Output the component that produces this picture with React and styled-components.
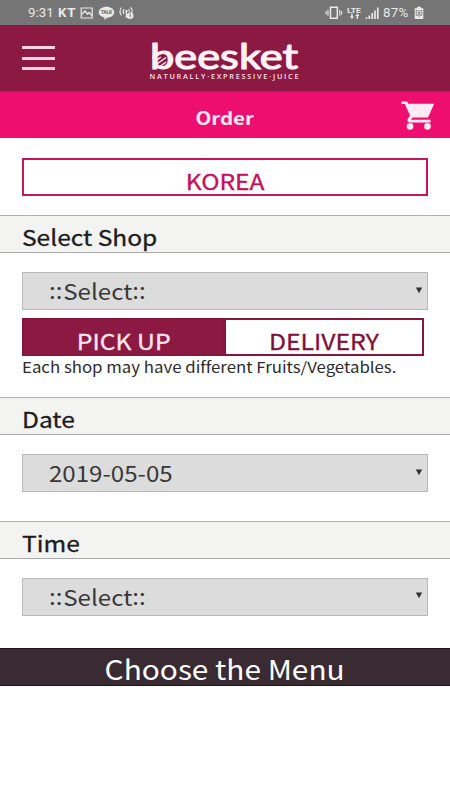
import React from "react";
import styled, { createGlobalStyle } from "styled-components";

const GlobalStyle = createGlobalStyle`
  * { box-sizing: border-box; }
  html, body { margin: 0; padding: 0; background: #fff; }
  body { font-family: "Noto Sans CJK KR", "Noto Sans", sans-serif; }
`;

const Screen = styled.div`
  width: 450px;
  height: 800px;
  overflow: hidden;
  background: #fff;
  color: #1c1c1c;
`;

const StatusBar = styled.div`
  height: 25px;
  padding: 1px 26px 0 28px;
  display: flex;
  align-items: center;
  justify-content: space-between;
  background: #757575;
  color: #e9e9e9;
  font: 400 13.3px/24px Roboto, sans-serif;
`;

const StatusGroup = styled.div`
  display: flex;
  align-items: center;
  height: 24px;
  svg { display: block; flex: none; }
`;

const Clock = styled.span`
  width: 30px;
  white-space: nowrap;
`;

const Carrier = styled.span`
  width: 22px;
  font-weight: 700;
  letter-spacing: 0.8px;
`;

const Percent = styled.span`
  width: 31px;
  letter-spacing: 0.3px;
`;

const Header = styled.header`
  height: 66px;
  padding: 0 22px;
  display: grid;
  grid-template-columns: 33px 1fr 33px;
  align-items: center;
  justify-items: center;
  background: #8c1941;
`;

const MenuButton = styled.button`
  width: 33px;
  height: 24px;
  padding: 0;
  border: 0;
  background: transparent;
  display: flex;
  flex-direction: column;
  justify-content: space-between;
  align-items: stretch;
`;

const MenuLine = styled.span`
  display: block;
  height: 3px;
  background: #ffd2e4;
`;

const TitleBar = styled.div`
  height: 47px;
  padding: 0 15px 0 48px;
  display: grid;
  grid-template-columns: 1fr 34px;
  align-items: center;
  background: #ee0e6f;
  border-top: 1px solid #d20f61;
  color: #ffeaf4;
  svg { display: block; }
`;

const Label = styled.span`
  display: inline-block;
  font-size: ${(p) => p.$size}px;
  font-weight: ${(p) => p.$weight || 400};
  font-variant-ligatures: none;
  -webkit-text-stroke: ${(p) => p.$stroke || 0}px currentColor;
  line-height: 36px;
  white-space: nowrap;
  transform: scaleX(${(p) => p.$stretch || 1.095});
  transform-origin: ${(p) => p.$origin || "left"} center;
`;

const CenteredTitle = styled.h1`
  margin: -2px 0 0;
  padding-left: 1px;
  text-align: center;
  font-weight: 700;
  line-height: 36px;
`;

const Country = styled.div`
  height: 38px;
  margin: 20px 22px 19px;
  padding-top: 2px;
  border: 2px solid #c6155f;
  color: #c5105c;
  text-align: center;
`;

const SectionHeading = styled.h2`
  height: 38px;
  margin: 0;
  padding: 2px 22px 0;
  background: #f3f3f2;
  border-top: 1px solid #b0b0b0;
  border-bottom: 1px solid #a9a9a9;
  font-weight: 500;
  line-height: 36px;
`;

const SelectBox = styled.div`
  height: 38px;
  margin: 19px 22px 0;
  padding: 0 4px 2px 26px;
  display: flex;
  align-items: center;
  justify-content: space-between;
  background: #dcdcdc;
  border: 1px solid #b9b9b9;
  color: #383838;
`;

const Colons = styled.span`
  display: inline-block;
  width: 13px;
  line-height: 30px;
  transform: translateY(-1px);
`;

const Tabs = styled.div`
  width: 402px;
  height: 38px;
  margin: 8px 22px 0;
  display: grid;
  grid-template-columns: 203px 199px;
`;

const Tab = styled.div`
  height: 38px;
  padding-top: 2px;
  border: 2px solid #85173f;
  border-left-width: ${(p) => (p.$active ? 2 : 1)}px;
  background: ${(p) => (p.$active ? "#8c1941" : "#fff")};
  color: ${(p) => (p.$active ? "#ffe6f0" : "#7f1139")};
  text-align: center;
`;

const Note = styled.p`
  height: 41px;
  margin: 0 22px;
  color: #2c2c2c;
  line-height: 21px;
  span { line-height: 21px; }
`;

const Gap = styled.div`
  height: ${(p) => p.$h}px;
`;

const MenuAction = styled.button`
  display: block;
  width: 100%;
  height: 38px;
  padding: 2px 0 0;
  border: 0;
  border-top: 1px solid #240f19;
  border-bottom: 1px solid #240f19;
  background: #3a2a31;
  color: #fff;
  font-family: inherit;
  text-align: center;
`;

const LogoArt = styled.svg`
  display: block;
  overflow: visible;
`;

function Logo() {
  return (
    <LogoArt width="152" height="42" viewBox="0 0 152 42" aria-label="beesket">
      <text x="1" y="32.3" textLength="148" lengthAdjust="spacingAndGlyphs" fill="#fff0f6" stroke="#fff0f6" strokeWidth="1.2" strokeLinejoin="round" fontFamily="Lato" fontWeight="400" fontSize="35.5">beesket</text>
      <path d="M3 20.5h5M5 25l7-5M5 29l12-8.5M9 31l8-6" stroke="#fff0f6" strokeWidth="1.5" />
      <text x="0.5" y="41.5" textLength="149" lengthAdjust="spacing" fill="#ffe0ec" fontFamily="Open Sans" fontWeight="600" fontSize="7.3">NATURALLY·EXPRESSIVE·JUICE</text>
    </LogoArt>
  );
}

function Cart() {
  return (
    <svg width="34" height="29" viewBox="0 0 34 29" fill="#ffeaf4">
      <path d="M0.5 0.5h5.5l1.4 2.3H33.2L27 16.5H11.5l-1.6 2.3H29.5V21.5H8.5q-3.2-.8-1.6-3.7L9 14.5 3.8 3H0.5z" />
      <circle cx="9" cy="25.4" r="3.3" />
      <circle cx="26.5" cy="25.4" r="3.3" />
    </svg>
  );
}

function LeftIcons() {
  return (
    <svg width="56" height="14" viewBox="0 0 56 14" fill="none" stroke="#e9e9e9">
      <path d="M1.2 2h11v10h-11z" strokeWidth="1.2" />
      <path d="M2 8l3-3 2.5 3 1.7-1.5 2.8 3" strokeWidth="1.3" />
      <path d="M26.5 0.8c4.2 0 7.7 2.3 7.7 5.5s-3.2 5.3-7 5.4L24 14l.6-2.5c-3.4-.6-5.8-2.6-5.8-5.2 0-3.2 3.4-5.5 7.7-5.5z" fill="#e9e9e9" stroke="none" />
      <text x="20.7" y="8.3" textLength="11.5" fill="#757575" stroke="none" fontFamily="Roboto" fontWeight="900" fontSize="5">TALK</text>
      <path d="M41.5 1.5q-3 4 0 8M44 3q-1.8 2.5 0 5M50.5 1.5q2.7 2.8 1 6M48.5 3q1.2 1.3.8 3" strokeWidth="1.1" />
      <circle cx="46.4" cy="5" r="1.2" fill="#e9e9e9" stroke="none" />
      <path d="M46.4 5v7" strokeWidth="1.2" />
      <circle cx="50.2" cy="9.7" r="3.3" fill="#e9e9e9" stroke="none" />
      <path d="M49.4 8.7l1-.8v3.6" stroke="#757575" strokeWidth=".8" />
    </svg>
  );
}

function RightIcons() {
  return (
    <svg width="58" height="14" viewBox="0 0 58 14" fill="none" stroke="#e9e9e9">
      <path d="M5.5 1.2h6.8v11H5.5z" strokeWidth="1.5" />
      <path d="M3 3.7v6M1.1 5v3.5M14.8 3.7v6M16.6 5v3.5" strokeWidth="1.1" />
      <text x="22" y="6.7" textLength="14" lengthAdjust="spacingAndGlyphs" fill="#e9e9e9" stroke="none" fontFamily="Roboto" fontWeight="700" fontSize="8">LTE</text>
      <path d="M26.2 7.5h1.4v3H29l-2.1 2.6-2.1-2.6h1.4zM31.7 13h1.4v-3h1.4l-2.1-2.6L30.3 10h1.4z" fill="#e9e9e9" stroke="none" />
      <path d="M41.5 13v-1.7M44.3 13v-3.5M47.2 13V7M50 13V4.5M52.8 13V1.5" strokeWidth="1.7" />
    </svg>
  );
}

function Battery() {
  return (
    <svg width="10" height="14" viewBox="0 0 10 14">
      <path d="M3 .8h4v1.4h2.3V13H.7V2.2H3z" fill="#e9e9e9" />
      <path d="M3.8 4.5H2.2v5h1.6M6.2 4.5h1.6v5H6.2M5 4v7M3.5 6l3 3M6.5 6l-3 3" stroke="#757575" strokeWidth=".8" fill="none" />
    </svg>
  );
}

function Arrow() {
  return (
    <svg width="8" height="7" viewBox="0 0 8 7">
      <path d="M.8.5h6.4L4 6.3z" fill="#333" />
    </svg>
  );
}

function Dropdown({ value, placeholder }) {
  return (
    <SelectBox>
      <Label $size={22}>
        {placeholder ? (
          <>
            <Colons>::</Colons>Select<Colons>::</Colons>
          </>
        ) : (
          value
        )}
      </Label>
      <Arrow />
    </SelectBox>
  );
}

export default function App() {
  return (
    <Screen>
      <GlobalStyle />
      <StatusBar>
        <StatusGroup>
          <Clock>9:31</Clock>
          <Carrier>KT</Carrier>
          <LeftIcons />
        </StatusGroup>
        <StatusGroup>
          <RightIcons />
          <Percent>87%</Percent>
          <Battery />
        </StatusGroup>
      </StatusBar>
      <Header>
        <MenuButton aria-label="Menu">
          <MenuLine />
          <MenuLine />
          <MenuLine />
        </MenuButton>
        <Logo />
      </Header>
      <TitleBar>
        <CenteredTitle>
          <Label $size={18} $weight={700} $stretch={1.14} $origin="center">Order</Label>
        </CenteredTitle>
        <Cart />
      </TitleBar>
      <Country>
        <Label $size={22} $stroke={0.3} $stretch={1.12} $origin="center">KOREA</Label>
      </Country>
      <SectionHeading>
        <Label $size={22} $stroke={0.3} $stretch={1.115}>Select Shop</Label>
      </SectionHeading>
      <Dropdown placeholder />
      <Tabs>
        <Tab $active>
          <Label $size={22} $stroke={0.3} $stretch={1.125} $origin="center">PICK UP</Label>
        </Tab>
        <Tab>
          <Label $size={22} $stroke={0.3} $stretch={1.125} $origin="center">DELIVERY</Label>
        </Tab>
      </Tabs>
      <Note>
        <Label $size={15} $stretch={1.12}>Each shop may have different Fruits/Vegetables.</Label>
      </Note>
      <SectionHeading>
        <Label $size={22} $stroke={0.3} $stretch={1.115}>Date</Label>
      </SectionHeading>
      <Dropdown value="2019-05-05" />
      <Gap $h={28.5} />
      <SectionHeading>
        <Label $size={22} $stroke={0.3} $stretch={1.115}>Time</Label>
      </SectionHeading>
      <Dropdown placeholder />
      <Gap $h={32.5} />
      <MenuAction>
        <Label $size={27} $stretch={1.105} $origin="center">Choose the Menu</Label>
      </MenuAction>
    </Screen>
  );
}
